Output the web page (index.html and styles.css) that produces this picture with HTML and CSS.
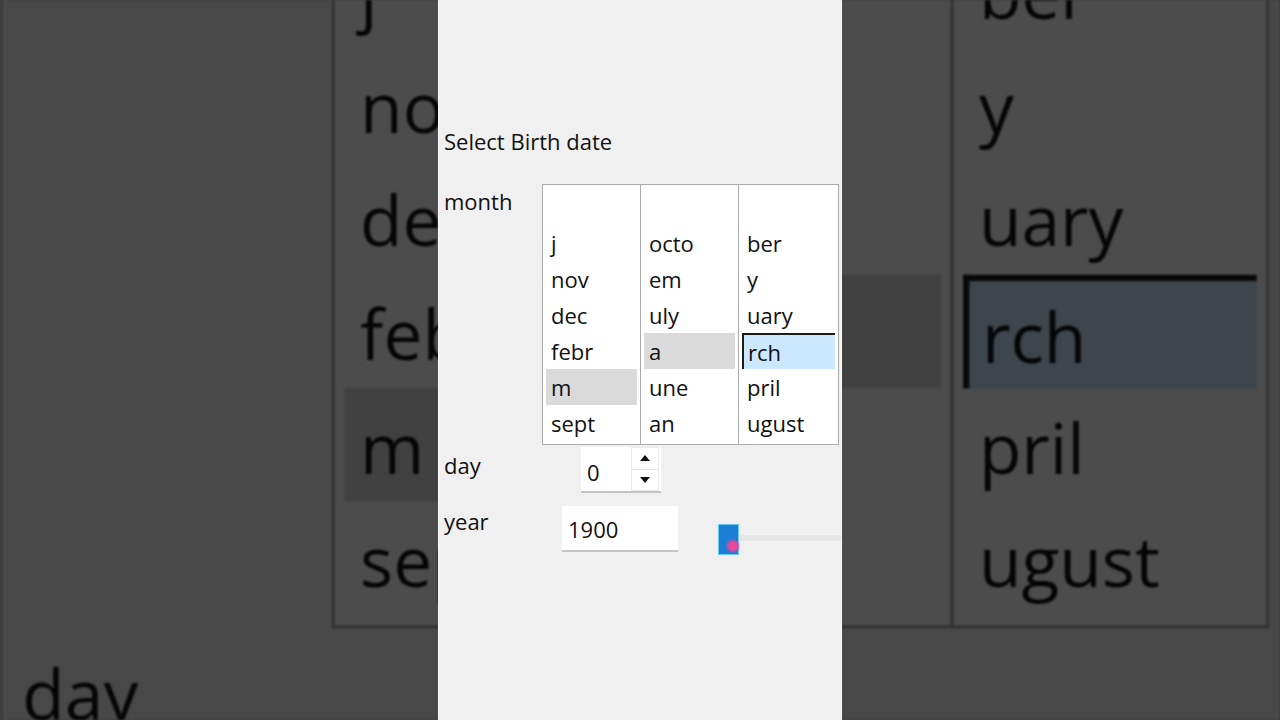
FILE: index.html
```html
<!DOCTYPE html>
<html lang="en">
<head>
<meta charset="utf-8">
<title>Select Birth date</title>
<link rel="stylesheet" href="styles.css">
</head>
<body>
<div class="backdrop">
  <div class="backdrop-stage"></div>
</div>

<main class="stage">
  <section class="panel">
    <h1 class="title">Select Birth date</h1>

    <div class="field month">
      <span class="field-label">month</span>
      <div class="listbox">
        <ul class="column">
          <li class="option">j</li>
          <li class="option">nov</li>
          <li class="option">dec</li>
          <li class="option">febr</li>
          <li class="option is-hover">m</li>
          <li class="option">sept</li>
        </ul>
        <ul class="column">
          <li class="option">octo</li>
          <li class="option">em</li>
          <li class="option">uly</li>
          <li class="option is-hover">a</li>
          <li class="option">une</li>
          <li class="option">an</li>
        </ul>
        <ul class="column">
          <li class="option">ber</li>
          <li class="option">y</li>
          <li class="option">uary</li>
          <li class="option is-selected">rch</li>
          <li class="option">pril</li>
          <li class="option">ugust</li>
        </ul>
      </div>
    </div>

    <div class="field day">
      <span class="field-label">day</span>
      <div class="spin">
        <span class="spin-value">0</span>
        <div class="spin-buttons">
          <span class="spin-button">
            <svg width="10" height="6" viewBox="0 0 10 6"><path d="M0 6 L5 0 L10 6 Z" fill="#111"/></svg>
          </span>
          <span class="spin-button">
            <svg width="10" height="6" viewBox="0 0 10 6"><path d="M0 0 L10 0 L5 6 Z" fill="#111"/></svg>
          </span>
        </div>
      </div>
    </div>

    <div class="field year">
      <span class="field-label">year</span>
      <div class="textbox">1900</div>
      <div class="slider">
        <span class="slider-thumb"></span>
        <span class="slider-track"></span>
      </div>
    </div>
  </section>
</main>

<script src="script.js"></script>
</body>
</html>
```

FILE: styles.css
```css
html, body {
  margin: 0;
  height: 720px;
  overflow: hidden;
  background: #3e3e3e;
}

/* enlarged, dimmed copy of the form that fills the sides */
.backdrop {
  position: fixed;
  inset: 0;
  overflow: hidden;
  filter: brightness(0.3) blur(1px);
}

.backdrop-stage {
  display: flex;
  justify-content: center;
  height: 720px;
  transform: scale(3.157);
  transform-origin: 639.5px 360px;
}

.stage {
  position: relative;
  z-index: 1;
  display: flex;
  justify-content: center;
  height: 720px;
}

.panel {
  width: 404px;
  height: 720px;
  box-sizing: border-box;
  padding: 126px 0 0 5px;
  background: #f0f0f0;
  border-left: 1px solid #fafafa;
  border-right: 1px solid #fafafa;
  overflow: hidden;
  font-family: "Open Sans", "Noto Sans", sans-serif;
  font-size: 22px;
  line-height: 30px;
  color: #111;
}

.title {
  margin: 0 0 28px;
  font-size: 22px;
  font-weight: 400;
  line-height: 30px;
}

.field {
  display: flex;
  align-items: flex-start;
}

.field-label {
  flex: none;
  width: 98px;
}

/* month list */
.month .field-label {
  padding-top: 2px;
}

.listbox {
  width: 297px;
  height: 261px;
  box-sizing: border-box;
  border: 1px solid #ababab;
  background: #fff;
  display: grid;
  grid-template-columns: 97px 98px 1fr;
}

.column {
  list-style: none;
  margin: 0;
  padding: 40px 0 0;
}

.column + .column {
  border-left: 1px solid #ababab;
}

.option {
  height: 36px;
  line-height: 36px;
  margin: 0 3px;
  padding-left: 5px;
  box-sizing: border-box;
}

.option.is-hover {
  background: #dadada;
}

.option.is-selected {
  background: #cce8ff;
  border-top: 2px solid #1c1c1c;
  border-left: 2px solid #1c1c1c;
  line-height: 34px;
  padding-left: 4px;
}

/* day spinner */
.day {
  margin-top: 2px;
}

.day .field-label {
  padding-top: 3px;
}

.spin {
  display: flex;
  margin-left: 39px;
  width: 80px;
  height: 46px;
  box-sizing: border-box;
  background: #fff;
  border-bottom: 2px solid #c4c4c4;
}

.spin-value {
  flex: 1;
  padding: 3px 0 0 6px;
  line-height: 44px;
}

.spin-buttons {
  display: flex;
  flex-direction: column;
  width: 28px;
  margin-right: 2px;
}

.spin-button {
  flex: 1;
  display: flex;
  align-items: center;
  justify-content: center;
  border: 1px solid #e9e9e9;
}

.spin-button + .spin-button {
  border-top: none;
}

/* year input and slider */
.year {
  margin-top: 13px;
}

.textbox {
  flex: none;
  margin-left: 20px;
  width: 116px;
  height: 46px;
  box-sizing: border-box;
  padding: 3px 0 0 6px;
  line-height: 40px;
  background: #fff;
  border-bottom: 2px solid #c4c4c4;
}

.slider {
  flex: 1;
  display: flex;
  align-items: center;
  height: 31px;
  margin: 18px 0 0 40px;
}

.slider-thumb {
  position: relative;
  flex: none;
  width: 21px;
  height: 31px;
  box-sizing: border-box;
  background: #1c7fd6;
  border: 1px solid #6ccaf0;
}

.slider-thumb::after {
  content: "";
  position: absolute;
  left: 8px;
  top: 15px;
  width: 12px;
  height: 12px;
  border-radius: 50%;
  background: #e8489e;
  filter: blur(0.8px);
}

.slider-track {
  flex: 1;
  height: 6px;
  margin-top: -3px;
  background: #e6e6e6;
}
```

FILE: script.js
```js
// Put an enlarged copy of the form behind it as the backdrop.
const panel = document.querySelector('.panel');
const copy = panel.cloneNode(true);
copy.setAttribute('aria-hidden', 'true');
document.querySelector('.backdrop-stage').appendChild(copy);
```
